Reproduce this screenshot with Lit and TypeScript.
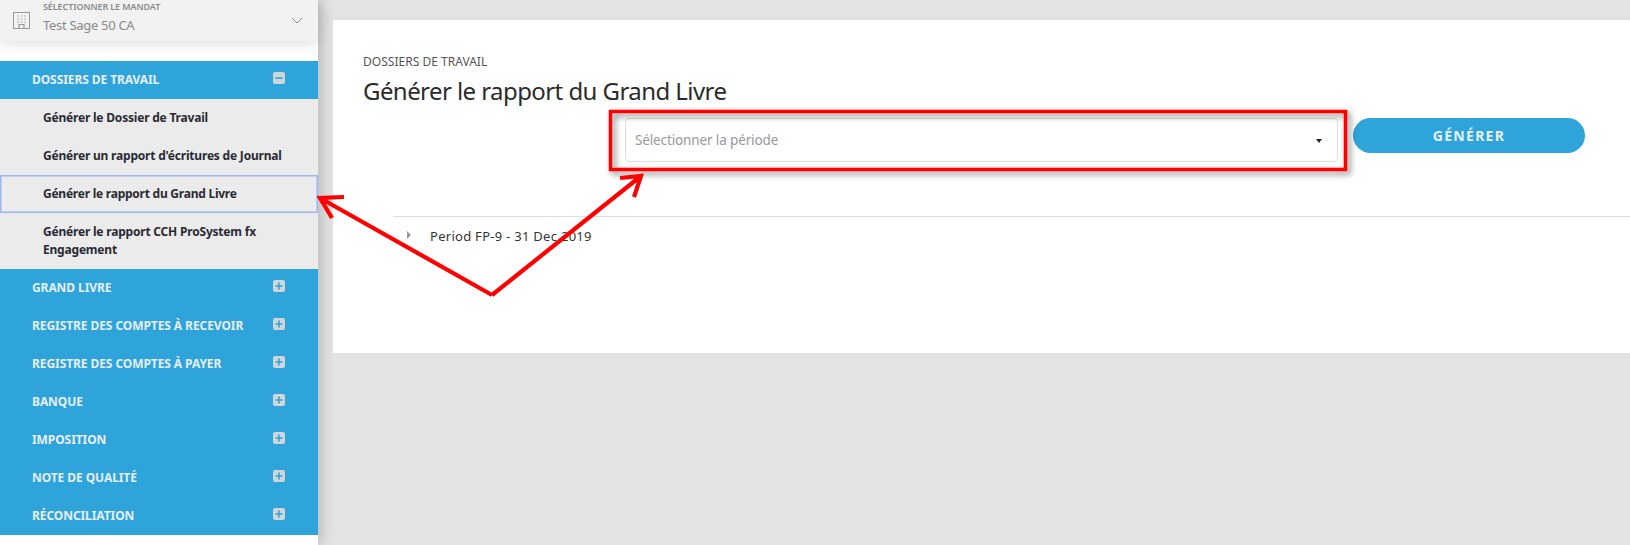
import { LitElement, html, css, svg } from "lit";
import { customElement } from "lit/decorators.js";

const SUB = [
  "Générer le Dossier de Travail",
  "Générer un rapport d'écritures de Journal",
  "Générer le rapport du Grand Livre",
  "Générer le rapport CCH ProSystem fx Engagement",
];
const GROUPS = [
  "GRAND LIVRE",
  "REGISTRE DES COMPTES À RECEVOIR",
  "REGISTRE DES COMPTES À PAYER",
  "BANQUE",
  "IMPOSITION",
  "NOTE DE QUALITÉ",
  "RÉCONCILIATION",
];

const toggle = (plus: boolean) => html`<svg class="toggle" width="12" height="12" viewBox="0 0 12 12">
  <rect width="12" height="12" rx="2" fill="#cfd6da"></rect>
  <path d="M2.5 6H9.5${plus ? "M6 2.5V9.5" : ""}" stroke="#2fa4da" stroke-width="1.6" fill="none"></path>
</svg>`;

@customElement("app-root")
export class AppRoot extends LitElement {
  static styles = css`
    :host { display: block; position: relative; width: 1630px; height: 545px; overflow: hidden; background: #e3e3e3; font-family: "Noto Sans", sans-serif; }
    .layout { display: grid; grid-template-columns: 318px 1fr; height: 545px; }
    .side { background: #fff; box-shadow: 2px 0 14px rgba(0,0,0,.22); position: relative; z-index: 1; }
    .mandate { height: 41px; background: #f2f2f2; display: flex; align-items: center; padding: 0 15px 0 13px; box-shadow: 0 3px 14px rgba(0,0,0,.12); border-radius: 0 0 4px 4px; box-sizing: border-box; }
    .mandate-text { margin-left: 13px; flex: 1; display: flex; flex-direction: column; }
    .mandate-label { font-size: 9px; font-weight: 600; color: #8a8a8a; line-height: 14px; margin-top: -6px; letter-spacing: -.1px; }
    .mandate-name { font-size: 13px; color: #8a8a8a; line-height: 20px; margin-top: 1px; letter-spacing: -.3px; }
    .menu { margin-top: 20px; }
    .group { height: 38px; background: #2fa4da; color: #e6eef3; display: flex; align-items: center; justify-content: space-between; padding: 0 33px 0 32px; box-sizing: border-box; font-size: 12px; font-weight: 700; letter-spacing: -.08px; }
    .group span { margin-top: -2px; }
    .toggle { margin-top: -4px; flex: none; }
    .item { background: #ebebeb; min-height: 38px; box-sizing: border-box; padding: 10px 32px 9px 43px; font-size: 12px; font-weight: 700; line-height: 18px; color: #2a2a33; letter-spacing: -.2px; }
    .item.focus { box-shadow: inset 0 0 0 1.5px #9db6f0; letter-spacing: -.24px; }
    .item.tall { padding-top: 10px; padding-bottom: 10px; height: 56px; }
    .main { padding: 20px 0 0 15px; }
    .panel { background: #fff; height: 333px; box-sizing: border-box; padding: 33px 0 0 30px; }
    .crumb { font-size: 12px; color: #555; line-height: 18px; letter-spacing: .02px; }
    .title { font-size: 24px; font-weight: 400; color: #2b2b2b; line-height: 32px; margin: 4px 0 0; letter-spacing: -.57px; }
    .form { display: flex; align-items: flex-start; gap: 15px; margin: 0 0 0 262px; padding-top: 11px; }
    .select { width: 713px; height: 44px; box-sizing: border-box; border: 1px solid #dcdcdc; border-radius: 4px; display: flex; align-items: center; justify-content: space-between; padding: 0 15px 0 9px; font-size: 13.5px; color: #999; letter-spacing: -.13px; }
    .caret { width: 0; height: 0; border-left: 3.5px solid transparent; border-right: 3.5px solid transparent; border-top: 4px solid #222; margin-top: 1px; }
    .btn { width: 232px; height: 35px; border: 0; border-radius: 18px; background: #2fa4da; color: #e9f1f5; font: 700 14px "Noto Sans", sans-serif; letter-spacing: 1.3px; padding: 0; }
    .tree { margin: 54px 0 0 30px; border-top: 1px solid #dedede; padding: 10px 0 0 14px; display: flex; align-items: center; gap: 19px; font-size: 13px; color: #333; line-height: 19px; letter-spacing: .28px; }
    .tri { width: 0; height: 0; border-top: 4px solid transparent; border-bottom: 4px solid transparent; border-left: 4px solid #999; margin-top: -4px; }
    .marks { position: absolute; inset: 0; pointer-events: none; z-index: 2; }
  `;

  render() {
    return html`
      <div class="layout">
        <aside class="side">
          <div class="mandate">
            <svg width="17" height="17" viewBox="0 0 17 17" fill="none" stroke="#9a9a9a">
              <rect x="0.5" y="0.5" width="16" height="16"></rect>
              <path d="M4 4h2M7.5 4h2M11 4h2M4 7h2M7.5 7h2M11 7h2M4 10h2M7.5 10h2M11 10h2" stroke="#b5b5b5"></path>
              <path d="M6 16.5v-4h5v4" stroke-width="1.2"></path>
            </svg>
            <div class="mandate-text">
              <span class="mandate-label">SÉLECTIONNER LE MANDAT</span>
              <span class="mandate-name">Test Sage 50 CA</span>
            </div>
            <svg width="12" height="7" viewBox="0 0 12 7" fill="none" stroke="#8a8a8a"><path d="M1 1l5 5 5-5"></path></svg>
          </div>
          <nav class="menu">
            <div class="group"><span>DOSSIERS DE TRAVAIL</span>${toggle(false)}</div>
            ${SUB.map((s, i) => html`<div class="item ${i === 2 ? "focus" : ""} ${i === 3 ? "tall" : ""}">${s}</div>`)}
            ${GROUPS.map((g) => html`<div class="group"><span>${g}</span>${toggle(true)}</div>`)}
          </nav>
        </aside>
        <main class="main">
          <section class="panel">
            <div class="crumb">DOSSIERS DE TRAVAIL</div>
            <h1 class="title">Générer le rapport du Grand Livre</h1>
            <div class="form">
              <div class="select"><span>Sélectionner la période</span><span class="caret"></span></div>
              <button class="btn">GÉNÉRER</button>
            </div>
            <div class="tree"><span class="tri"></span><span>Period FP-9 - 31 Dec 2019</span></div>
          </section>
        </main>
      </div>
      <svg class="marks" width="1630" height="545" viewBox="0 0 1630 545">
        <defs>
          <filter id="sh" x="-5%" y="-30%" width="110%" height="160%">
            <feDropShadow dx="3" dy="3" stdDeviation="3" flood-color="#000" flood-opacity=".5"></feDropShadow>
          </filter>
        </defs>
        ${svg`<rect x="610.5" y="111.5" width="735" height="58" fill="none" stroke="#f00" stroke-width="3.5" filter="url(#sh)"></rect>
        <path d="M492 295L320 198M344 197L320 198L332 218M492 295L641 176M620 178L641 176L634 197" fill="none" stroke="#f00" stroke-width="4.2"></path>`}
      </svg>
    `;
  }
}
